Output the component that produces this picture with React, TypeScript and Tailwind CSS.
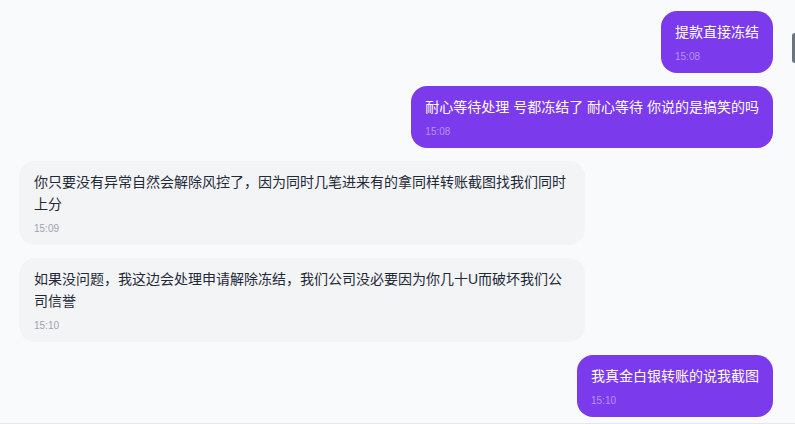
import React from 'react';

type Msg = {
  id: number;
  mine: boolean;
  text: string;
  time: string;
};

const messages: Msg[] = [
  { id: 1, mine: true, text: '提款直接冻结', time: '15:08' },
  { id: 2, mine: true, text: '耐心等待处理 号都冻结了 耐心等待 你说的是搞笑的吗', time: '15:08' },
  {
    id: 3,
    mine: false,
    text: '你只要没有异常自然会解除风控了，因为同时几笔进来有的拿同样转账截图找我们同时上分',
    time: '15:09',
  },
  {
    id: 4,
    mine: false,
    text: '如果没问题，我这边会处理申请解除冻结，我们公司没必要因为你几十U而破坏我们公司信誉',
    time: '15:10',
  },
  { id: 5, mine: true, text: '我真金白银转账的说我截图', time: '15:10' },
];

function Bubble({ msg }: { msg: Msg }) {
  if (msg.mine) {
    return (
      <div className="flex justify-end">
        <div className="max-w-[75%] rounded-2xl bg-[#7c3aed] px-3.5 pt-2.5 pb-2.5">
          <p className="text-[14px] leading-[22px] text-white">{msg.text}</p>
          <div className="mt-2 text-[10px] leading-3 text-[#b794f6]">{msg.time}</div>
        </div>
      </div>
    );
  }

  return (
    <div className="flex justify-start">
      <div className="max-w-[75%] rounded-2xl bg-[#f3f4f6] px-[15px] pt-2.5 pb-2.5">
        <p className="text-[14px] leading-[22px] text-[#1f2937]">{msg.text}</p>
        <div className="mt-2 text-[10px] leading-3 text-[#9ca3af]">{msg.time}</div>
      </div>
    </div>
  );
}

export default function App() {
  return (
    <div
      className="relative flex h-[424px] w-[795px] flex-col overflow-hidden bg-[#f9fafb]"
      style={{ fontFamily: '"Liberation Sans", "Noto Sans CJK SC", sans-serif' }}
    >
      <div className="flex flex-1 flex-col gap-[13px] overflow-hidden pt-[11px] pl-[19px] pr-[22px]">
        {messages.map((m) => (
          <Bubble key={m.id} msg={m} />
        ))}
      </div>
      <div className="h-px shrink-0 bg-[#e5e7eb]" />
      <div className="absolute top-[33px] right-0 h-[30px] w-[3px] rounded-l-sm bg-[#6b7280]" />
    </div>
  );
}
